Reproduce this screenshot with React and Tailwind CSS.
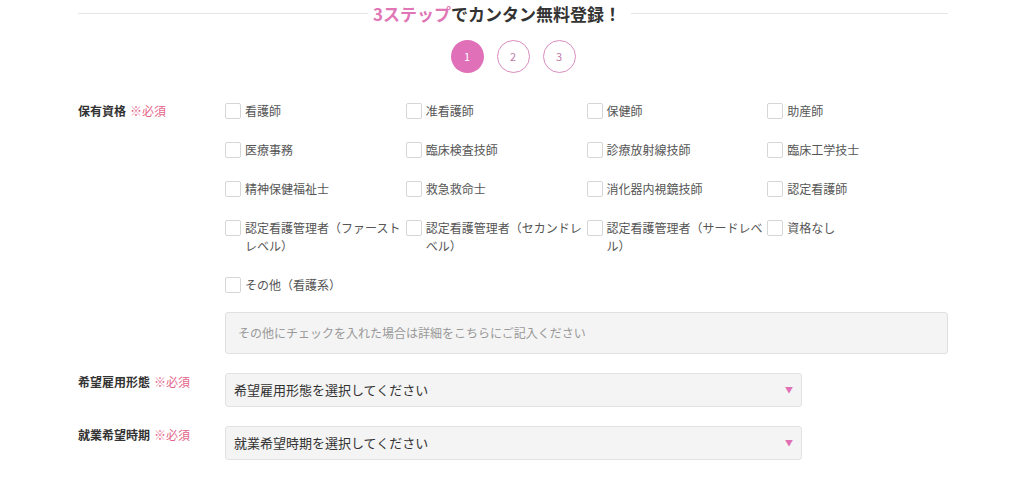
const quals = [
  "看護師",
  "准看護師",
  "保健師",
  "助産師",
  "医療事務",
  "臨床検査技師",
  "診療放射線技師",
  "臨床工学技士",
  "精神保健福祉士",
  "救急救命士",
  "消化器内視鏡技師",
  "認定看護師",
  "認定看護管理者（ファーストレベル）",
  "認定看護管理者（セカンドレベル）",
  "認定看護管理者（サードレベル）",
  "資格なし",
  "その他（看護系）",
];

const Required = () => <span className="ml-1 font-normal text-[#e3668a]">※必須</span>;

const Select = ({ placeholder }) => (
  <div className="flex h-[34px] w-[577px] items-center justify-between rounded-[3px] border border-[#e2e2e2] bg-[#f4f4f4] pl-2 pr-[8px] text-[13px] text-[#333]">
    <span>{placeholder}</span>
    <span className="text-[8px] text-[#e070b4]">▼</span>
  </div>
);

export default function App() {
  return (
    <div
      className="min-h-[480px] bg-white text-[#333]"
      style={{ fontFamily: '"Noto Sans CJK JP", "Noto Sans", sans-serif' }}
    >
      <div className="ml-[78px] w-[870px]">
        {/* heading */}
        <div className="flex h-[27px] items-center">
          <div className="h-px w-[290px] bg-[#e6e6e6]" />
          <h2 className="pl-[5px] pr-[10px] text-[17px] font-bold leading-none">
            <span className="text-[#e076b6]">3ステップ</span>でカンタン無料登録！
          </h2>
          <div className="h-px flex-1 bg-[#e6e6e6]" />
        </div>

        {/* steps */}
        <div className="mt-[13px] flex justify-center gap-[13px]">
          <div className="flex h-[33px] w-[33px] items-center justify-center rounded-full bg-[#e070b8] text-[11px] text-white">
            1
          </div>
          <div className="flex h-[33px] w-[33px] items-center justify-center rounded-full border border-[#d98cbd] text-[11px] text-[#c07aa8]">
            2
          </div>
          <div className="flex h-[33px] w-[33px] items-center justify-center rounded-full border border-[#d98cbd] text-[11px] text-[#c07aa8]">
            3
          </div>
        </div>

        {/* qualifications */}
        <div className="mt-[29px] flex">
          <div className="w-[147px] text-[12px] font-bold leading-[18px]">
            保有資格<Required />
          </div>
          <div className="flex-1">
            <div className="grid grid-cols-4 gap-y-[21px]">
              {quals.map((q) => (
                <label key={q} className="flex items-start gap-[4px] pr-[2px]">
                  <span className="mt-[1px] h-[16px] w-[16px] shrink-0 rounded-[2px] border border-[#d6d6d6] bg-white" />
                  <span className="text-[12px] leading-[18px] text-[#555]">{q}</span>
                </label>
              ))}
            </div>
            <div className="mt-[18px] flex h-[42px] items-center rounded-[3px] border border-[#e0e0e0] bg-[#f4f4f4] px-3 text-[12px] text-[#999]">
              その他にチェックを入れた場合は詳細をこちらにご記入ください
            </div>
          </div>
        </div>

        {/* employment type */}
        <div className="mt-[19px] flex">
          <div className="w-[147px] text-[12px] font-bold leading-[18px]">
            希望雇用形態<Required />
          </div>
          <Select placeholder="希望雇用形態を選択してください" />
        </div>

        <div className="mt-[19px] flex">
          <div className="w-[147px] text-[12px] font-bold leading-[18px]">
            就業希望時期<Required />
          </div>
          <Select placeholder="就業希望時期を選択してください" />
        </div>
      </div>
    </div>
  );
}
